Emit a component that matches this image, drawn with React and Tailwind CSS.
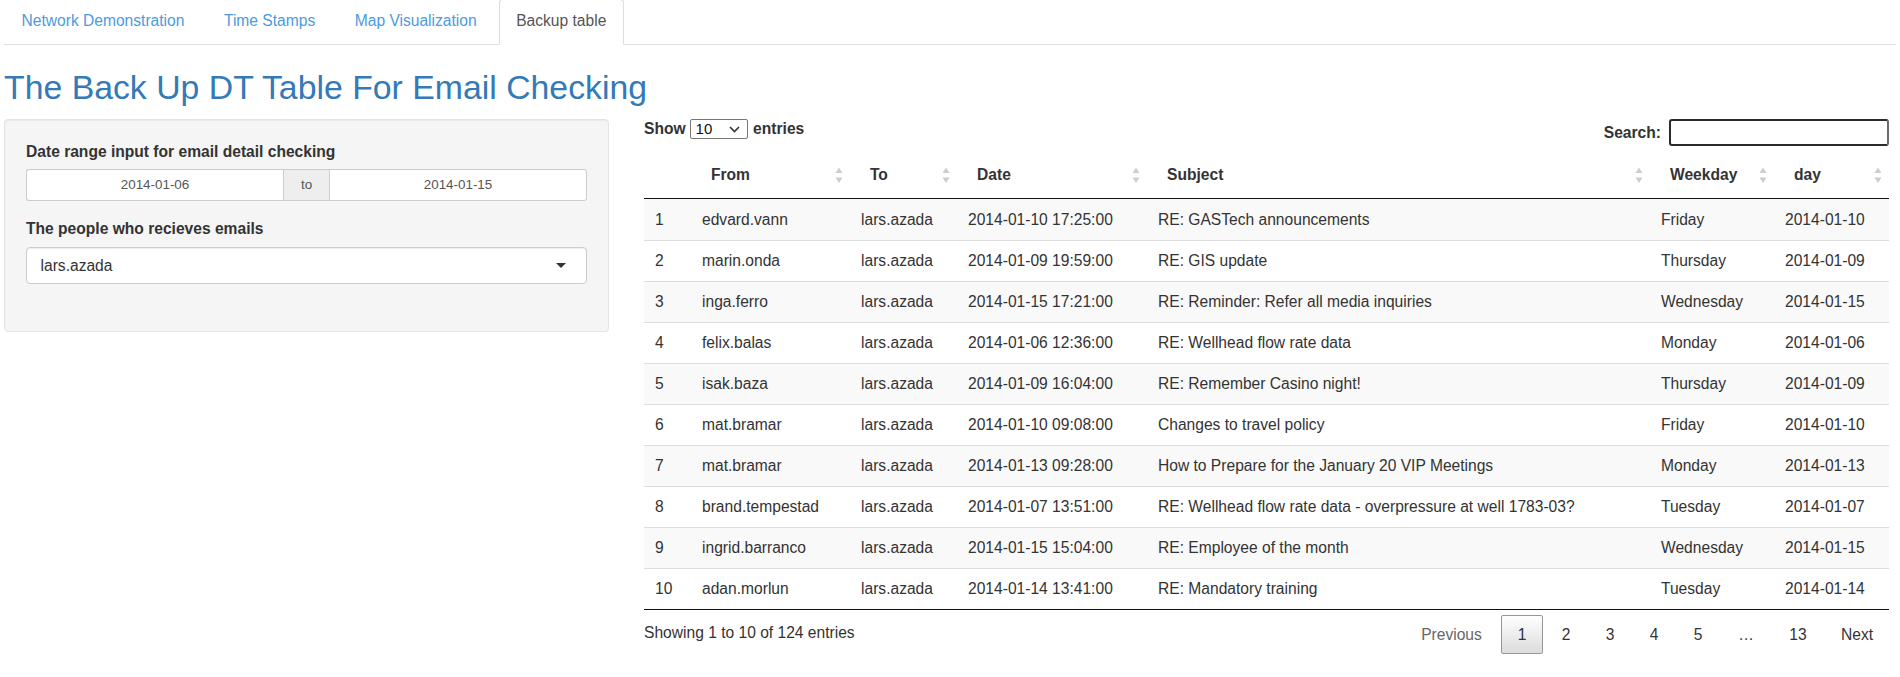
import React from "react";

const rows = [
  ["1", "edvard.vann", "lars.azada", "2014-01-10 17:25:00", "RE: GASTech announcements", "Friday", "2014-01-10"],
  ["2", "marin.onda", "lars.azada", "2014-01-09 19:59:00", "RE: GIS update", "Thursday", "2014-01-09"],
  ["3", "inga.ferro", "lars.azada", "2014-01-15 17:21:00", "RE: Reminder: Refer all media inquiries", "Wednesday", "2014-01-15"],
  ["4", "felix.balas", "lars.azada", "2014-01-06 12:36:00", "RE: Wellhead flow rate data", "Monday", "2014-01-06"],
  ["5", "isak.baza", "lars.azada", "2014-01-09 16:04:00", "RE: Remember Casino night!", "Thursday", "2014-01-09"],
  ["6", "mat.bramar", "lars.azada", "2014-01-10 09:08:00", "Changes to travel policy", "Friday", "2014-01-10"],
  ["7", "mat.bramar", "lars.azada", "2014-01-13 09:28:00", "How to Prepare for the January 20 VIP Meetings", "Monday", "2014-01-13"],
  ["8", "brand.tempestad", "lars.azada", "2014-01-07 13:51:00", "RE: Wellhead flow rate data - overpressure at well 1783-03?", "Tuesday", "2014-01-07"],
  ["9", "ingrid.barranco", "lars.azada", "2014-01-15 15:04:00", "RE: Employee of the month", "Wednesday", "2014-01-15"],
  ["10", "adan.morlun", "lars.azada", "2014-01-14 13:41:00", "RE: Mandatory training", "Tuesday", "2014-01-14"],
];

const headers = ["", "From", "To", "Date", "Subject", "Weekday", "day"];
const widths = [47, 159, 107, 190, 503, 124, 115];

function SortIcon() {
  return (
    <svg width="8" height="17" viewBox="0 0 8 17" className="shrink-0">
      <path d="M4 0.5L7.5 6H0.5Z" fill="#cdcdcd" />
      <path d="M0.5 10.5H7.5L4 16Z" fill="#cdcdcd" />
    </svg>
  );
}

function Tab({ label, active }) {
  return (
    <li className="-mb-px mr-[4.5px]">
      <div
        className={
          "whitespace-nowrap rounded-t-[4px] border px-[16.5px] pt-[10px] pb-[12px] leading-[22px] " +
          (active
            ? "border-[#ddd] border-b-white bg-white text-[#555]"
            : "border-transparent text-[#4b9be0]")
        }
      >
        {label}
      </div>
    </li>
  );
}

export default function App() {
  return (
    <div className="w-[1900px] h-[677px] overflow-hidden bg-white px-[4px] font-['Liberation_Sans',Arial,sans-serif] text-[15.6px] leading-[22px] text-[#333]">
      <ul className="-mt-px flex border-b border-[#ddd]">
        <Tab label="Network Demonstration" />
        <Tab label="Time Stamps" />
        <Tab label="Map Visualization" />
        <Tab label="Backup table" active />
      </ul>

      <h2 className="mt-[24px] mb-[13px] text-[33.8px] leading-[37px] font-normal text-[#337ab7] whitespace-nowrap">
        The Back Up DT Table For Email Checking
      </h2>

      <div className="flex items-start">
        {/* Sidebar */}
        <div className="w-[605px] shrink-0 rounded-[4px] border border-[#e3e3e3] bg-[#f5f5f5] px-[21px] pt-[21px] pb-[47px] shadow-[inset_0_1px_1px_rgba(0,0,0,0.05)]">
          <div className="font-bold leading-[22px] whitespace-nowrap">Date range input for email detail checking</div>
          <div className="mt-[6px] flex h-[32px] text-[13.4px] text-[#555]">
            <div className="flex w-[257px] items-center justify-center rounded-l-[3px] border-y border-l border-[#ccc] bg-white">
              2014-01-06
            </div>
            <div className="flex w-[47px] items-center justify-center border border-[#ccc] bg-[#eee]">to</div>
            <div className="flex w-[257px] items-center justify-center rounded-r-[3px] border-y border-r border-[#ccc] bg-white">
              2014-01-15
            </div>
          </div>
          <div className="mt-[17px] font-bold leading-[22px] whitespace-nowrap">The people who recieves emails</div>
          <div className="mt-[7px] flex h-[37px] items-center justify-between rounded-[4px] border border-[#ccc] bg-white pl-[13.5px] pr-[20px] shadow-[inset_0_1px_1px_rgba(0,0,0,0.075)]">
            <span className="text-[#333]">lars.azada</span>
            <span className="h-0 w-0 border-x-[5.5px] border-t-[5.5px] border-x-transparent border-t-[#333]" />
          </div>
        </div>

        {/* Table area */}
        <div className="ml-[35px] w-[1245px] shrink-0">
          <div className="flex h-[27px] items-start justify-between">
            <div className="flex h-[20px] items-center">
              <span className="font-bold">Show</span>
              <div className="ml-[4px] flex h-[20px] w-[58px] items-center justify-between rounded-[2px] border border-[#767676] bg-white pl-[5px] pr-[7px] text-[15px] leading-[18px] text-[#111]">
                <span>10</span>
                <svg width="11" height="7" viewBox="0 0 11 7">
                  <path d="M1 1L5.5 5.5L10 1" fill="none" stroke="#333" strokeWidth="1.6" />
                </svg>
              </div>
              <span className="ml-[5.5px] font-bold">entries</span>
            </div>
            <div className="flex h-[27px] items-center">
              <span className="font-bold">Search:</span>
              <div className="ml-[8px] h-[27px] w-[220px] rounded-[3px] border-2 border-[#2b2b2b] border-r-[#6a6a6a] bg-white" />
            </div>
          </div>

          <table className="mt-[8px] w-[1245px] table-fixed border-separate border-spacing-0">
            <colgroup>
              {widths.map((w, i) => (
                <col key={i} style={{ width: w }} />
              ))}
            </colgroup>
            <thead>
              <tr>
                {headers.map((h, i) => (
                  <th
                    key={i}
                    className="border-b border-[#111] pt-[10px] pb-[12px] pl-[20px] pr-[7px] text-left font-bold"
                  >
                    <div className="flex h-[22px] items-center justify-between">
                      <span>{h}</span>
                      {i > 0 && <SortIcon />}
                    </div>
                  </th>
                ))}
              </tr>
            </thead>
            <tbody>
              {rows.map((r, ri) => {
                const last = ri === rows.length - 1;
                return (
                  <tr key={ri} className={ri % 2 === 0 ? "bg-[#f9f9f9]" : "bg-white"}>
                    {r.map((c, ci) => (
                      <td
                        key={ci}
                        className={
                          "whitespace-nowrap px-[11px] py-0 align-middle leading-[22px] " +
                          (last ? "h-[42px] border-t border-b border-t-[#ddd] border-b-[#111]" : ri > 0 ? "h-[41px] border-t border-[#ddd]" : "h-[41px]")
                        }
                      >
                        {c}
                      </td>
                    ))}
                  </tr>
                );
              })}
            </tbody>
          </table>

          <div className="flex items-start justify-between">
            <div className="mt-[12px] whitespace-nowrap">Showing 1 to 10 of 124 entries</div>
            <div className="mt-[5px] flex items-center">
              <div className="flex h-[39px] w-[95px] items-center justify-center border border-transparent text-[#666]">Previous</div>
              <div className="ml-[2px] flex h-[39px] w-[42px] items-center justify-center rounded-[2px] border border-[#979797] bg-linear-to-b from-white to-[#dcdcdc] text-[#333]">1</div>
              <div className="ml-[2px] flex h-[39px] w-[42px] items-center justify-center border border-transparent">2</div>
              <div className="ml-[2px] flex h-[39px] w-[42px] items-center justify-center border border-transparent">3</div>
              <div className="ml-[2px] flex h-[39px] w-[42px] items-center justify-center border border-transparent">4</div>
              <div className="ml-[2px] flex h-[39px] w-[42px] items-center justify-center border border-transparent">5</div>
              <div className="ml-[2px] flex h-[39px] w-[50px] items-center justify-center">…</div>
              <div className="ml-[2px] flex h-[39px] w-[50px] items-center justify-center border border-transparent">13</div>
              <div className="ml-[2px] flex h-[39px] w-[64px] items-center justify-center border border-transparent">Next</div>
            </div>
          </div>
        </div>
      </div>
    </div>
  );
}
